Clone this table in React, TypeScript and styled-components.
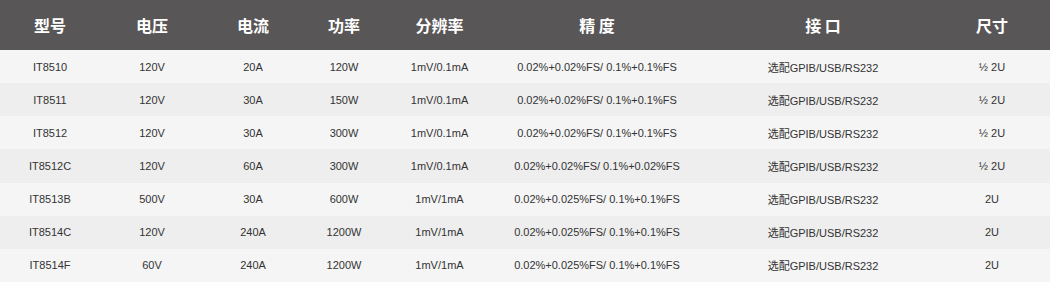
import React from 'react';
import styled, { createGlobalStyle } from 'styled-components';

const GlobalStyle = createGlobalStyle`
  html, body {
    margin: 0;
    padding: 0;
    background: #ffffff;
  }
  body {
    font-family: "Liberation Sans", Arial, "Noto Sans CJK SC", sans-serif;
  }
`;

const columns = '100px 104px 98px 84px 107px 208px 244px 94px';

const Table = styled.div`
  width: 1050px;
  height: 282px;
  display: grid;
  grid-template-rows: 50px repeat(7, 1fr);
  overflow: hidden;
`;

const Row = styled.div<{ $head?: boolean; $alt?: boolean }>`
  display: grid;
  grid-template-columns: ${columns};
  padding-right: 11px;
  align-items: center;
  background: ${(p) => (p.$head ? '#595657' : p.$alt ? '#eeeeee' : '#f5f5f5')};
  color: ${(p) => (p.$head ? '#ffffff' : '#333333')};
  font-size: ${(p) => (p.$head ? '16px' : '11px')};
  font-weight: ${(p) => (p.$head ? 700 : 400)};
  font-family: ${(p) =>
    p.$head
      ? '"Noto Sans CJK SC", "Liberation Sans", sans-serif'
      : '"Liberation Sans", Arial, "Noto Sans CJK SC", sans-serif'};
`;

const Cell = styled.div`
  text-align: center;
  white-space: nowrap;
`;

const headers = ['型号', '电压', '电流', '功率', '分辨率', '精 度', '接 口', '尺寸'];

const rows: string[][] = [
  ['IT8510', '120V', '20A', '120W', '1mV/0.1mA', '0.02%+0.02%FS/ 0.1%+0.1%FS', '选配GPIB/USB/RS232', '½ 2U'],
  ['IT8511', '120V', '30A', '150W', '1mV/0.1mA', '0.02%+0.02%FS/ 0.1%+0.1%FS', '选配GPIB/USB/RS232', '½ 2U'],
  ['IT8512', '120V', '30A', '300W', '1mV/0.1mA', '0.02%+0.02%FS/ 0.1%+0.1%FS', '选配GPIB/USB/RS232', '½ 2U'],
  ['IT8512C', '120V', '60A', '300W', '1mV/0.1mA', '0.02%+0.02%FS/ 0.1%+0.02%FS', '选配GPIB/USB/RS232', '½ 2U'],
  ['IT8513B', '500V', '30A', '600W', '1mV/1mA', '0.02%+0.025%FS/ 0.1%+0.1%FS', '选配GPIB/USB/RS232', '2U'],
  ['IT8514C', '120V', '240A', '1200W', '1mV/1mA', '0.02%+0.025%FS/ 0.1%+0.1%FS', '选配GPIB/USB/RS232', '2U'],
  ['IT8514F', '60V', '240A', '1200W', '1mV/1mA', '0.02%+0.025%FS/ 0.1%+0.1%FS', '选配GPIB/USB/RS232', '2U'],
];

export default function App() {
  return (
    <>
      <GlobalStyle />
      <Table>
        <Row $head>
          {headers.map((h) => (
            <Cell key={h}>{h}</Cell>
          ))}
        </Row>
        {rows.map((r, i) => (
          <Row key={r[0]} $alt={i % 2 === 1}>
            {r.map((c, j) => (
              <Cell key={j}>{c}</Cell>
            ))}
          </Row>
        ))}
      </Table>
    </>
  );
}
